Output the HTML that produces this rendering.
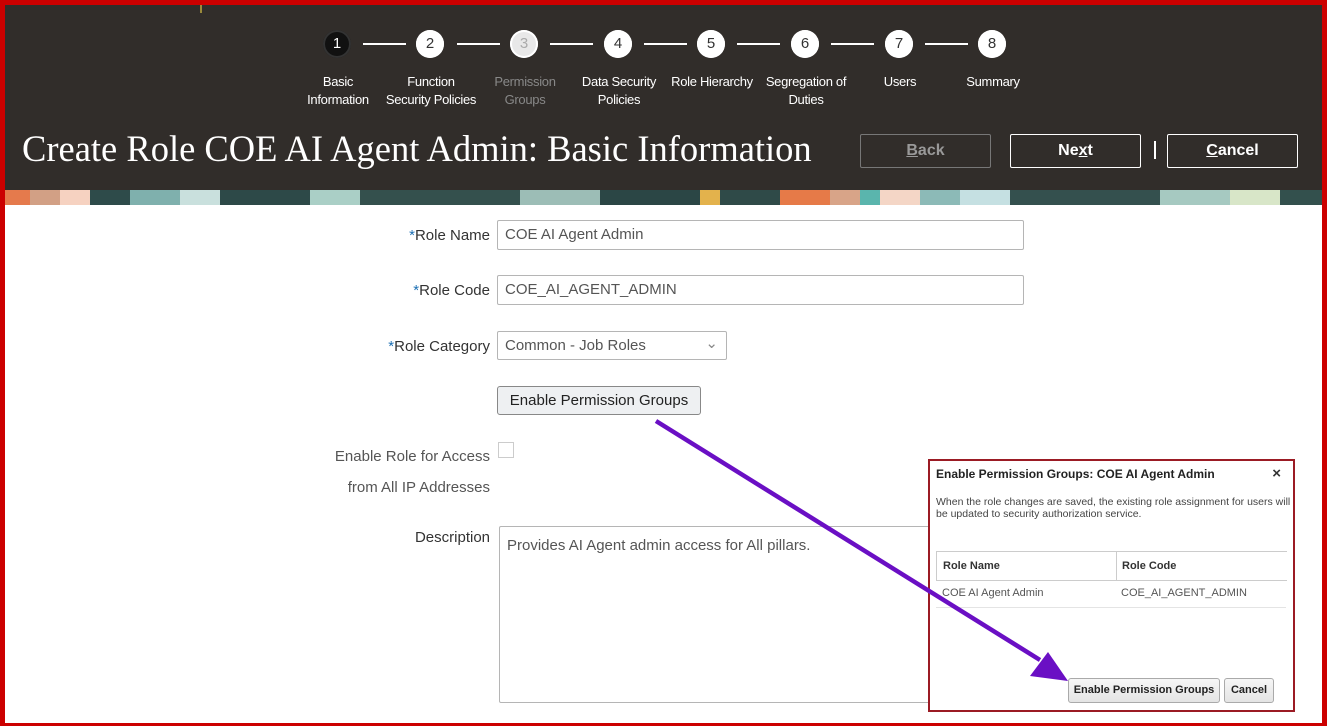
<!DOCTYPE html>
<html><head><style>
body{margin:0;width:1327px;height:726px;overflow:hidden;background:#fff;font-family:"Liberation Sans",sans-serif;position:relative}
.frame{position:absolute;left:0;top:0;width:1327px;height:726px;box-sizing:border-box;border:5px solid #c00;border-bottom-width:3px;pointer-events:none;z-index:5}
.hdr{position:absolute;left:0;top:0;width:1327px;height:191px;background:#312d2a}
.stripe{position:absolute;left:0;top:190px;width:1327px;height:15px;background:linear-gradient(90deg,#e57a4c 0 30px,#d2a085 30px 60px,#f6d2c1 60px 90px,#2e4b4a 90px 130px,#7fb0ad 130px 180px,#c9e0dd 180px 220px,#2d4948 220px 310px,#aacfc6 310px 360px,#34504d 360px 520px,#9cbdb6 520px 600px,#2b4645 600px 700px,#e3b24c 700px 720px,#2f4a48 720px 780px,#e67a48 780px 830px,#d8a488 830px 860px,#5ab5ad 860px 880px,#f4d6c6 880px 920px,#8cbab7 920px 960px,#c5e0e2 960px 1010px,#34504e 1010px 1160px,#a6c9c1 1160px 1230px,#d8e6c8 1230px 1280px,#33504d 1280px)}
.step{position:absolute;top:30px;width:28px;height:28px;border-radius:50%;background:#fff;color:#333;font-size:15px;text-align:center;line-height:28px;box-shadow:0 0 0 2px #fff inset}
.line{position:absolute;top:43px;height:2px;background:#fff;width:43px}
.lbl{position:absolute;top:73px;width:120px;text-align:center;color:#fff;font-size:13px;line-height:18px;letter-spacing:-.3px}
h1{position:absolute;left:22px;top:127px;margin:0;font-family:"Liberation Serif",serif;font-weight:normal;font-size:36.5px;color:#fff}
.hb{position:absolute;top:134px;width:131px;height:34px;box-sizing:border-box;border:1px solid #fff;border-radius:2px;color:#fff;font-weight:bold;font-size:16px;text-align:center;line-height:32px}
.fl{position:absolute;right:837px;font-size:15px;color:#333;text-align:right}
.fl b{color:#1c6fb3;font-weight:normal}
.inp{position:absolute;left:497px;box-sizing:border-box;border:1px solid #b5b5b5;border-radius:2px;font-size:15px;color:#555;padding-left:7px;line-height:28px;height:30px}
.dlg{position:absolute;left:928px;top:459px;width:367px;height:253px;box-sizing:border-box;border:2px solid #9b1b24;background:#fff;font-size:11px;color:#333;z-index:3}
.db{position:absolute;top:217px;height:25px;box-sizing:border-box;border:1px solid #aaa;border-radius:3px;background:linear-gradient(#f6f6f6,#e4e4e4);font-weight:bold;line-height:23px;text-align:center;font-size:11px;color:#222}
</style></head><body>
<div class="hdr"></div>
<div style="position:absolute;left:200px;top:0;width:2px;height:13px;background:#9a8a3a"></div>
<div class="stripe"></div>
<div class="step" style="left:323px;background:#111;color:#fff;box-shadow:0 0 0 2px #333 inset">1</div>
<div class="step" style="left:416px">2</div>
<div class="step" style="left:510px;background:#e8e8e8;color:#aaa">3</div>
<div class="step" style="left:604px">4</div>
<div class="step" style="left:697px">5</div>
<div class="step" style="left:791px">6</div>
<div class="step" style="left:885px">7</div>
<div class="step" style="left:978px">8</div>
<div class="line" style="left:363px"></div><div class="line" style="left:457px"></div><div class="line" style="left:550px"></div><div class="line" style="left:644px"></div><div class="line" style="left:737px"></div><div class="line" style="left:831px"></div><div class="line" style="left:925px"></div>
<div class="lbl" style="left:278px">Basic<br>Information</div>
<div class="lbl" style="left:371px">Function<br>Security Policies</div>
<div class="lbl" style="left:465px;color:#888">Permission<br>Groups</div>
<div class="lbl" style="left:559px">Data Security<br>Policies</div>
<div class="lbl" style="left:652px">Role Hierarchy</div>
<div class="lbl" style="left:746px">Segregation of<br>Duties</div>
<div class="lbl" style="left:840px">Users</div>
<div class="lbl" style="left:933px">Summary</div>
<h1>Create Role COE AI Agent Admin: Basic Information</h1>
<div class="hb" style="left:860px;border-color:#777;color:#999"><u>B</u>ack</div>
<div class="hb" style="left:1010px">Ne<u>x</u>t</div>
<div style="position:absolute;left:1154px;top:141px;width:2px;height:18px;background:#fff"></div>
<div class="hb" style="left:1167px"><u>C</u>ancel</div>

<div class="fl" style="top:227px"><b>*</b>Role Name</div>
<div class="inp" style="top:220px;width:527px">COE AI Agent Admin</div>
<div class="fl" style="top:282px"><b>*</b>Role Code</div>
<div class="inp" style="top:275px;width:527px">COE_AI_AGENT_ADMIN</div>
<div class="fl" style="top:338px"><b>*</b>Role Category</div>
<div class="inp" style="top:331px;width:230px;height:29px">Common - Job Roles<span style="position:absolute;right:8px;top:-2px;color:#888">&#8964;</span></div>
<div style="position:absolute;left:497px;top:386px;width:204px;height:29px;box-sizing:border-box;border:1px solid #888;border-radius:3px;background:#eef0f2;font-size:15px;color:#222;text-align:center;line-height:27px">Enable Permission Groups</div>
<div class="fl" style="top:441px;color:#555;line-height:31px">Enable Role for Access<br>from All IP Addresses</div>
<div style="position:absolute;left:498px;top:442px;width:16px;height:16px;border:1px solid #ccc;box-sizing:border-box"></div>
<div class="fl" style="top:529px">Description</div>
<div class="inp" style="top:526px;width:440px;height:177px;left:499px;line-height:18px;padding-top:10px">Provides AI Agent admin access for All pillars.</div>

<div class="dlg">
<div style="position:absolute;left:6px;top:6px;font-weight:bold;font-size:12px;color:#222">Enable Permission Groups: COE AI Agent Admin</div>
<div style="position:absolute;right:12px;top:4px;font-size:15px;font-weight:bold">×</div>
<div style="position:absolute;left:6px;top:35px;width:355px;line-height:12px;color:#444;font-size:10.5px">When the role changes are saved, the existing role assignment for users will be updated to security authorization service.</div>
<div style="position:absolute;left:6px;top:90px;width:350px;height:28px;border-top:1px solid #ccc;border-bottom:1px solid #ccc;border-left:1px solid #ccc;font-weight:bold">
<span style="position:absolute;left:6px;top:8px">Role Name</span>
<span style="position:absolute;left:179px;top:0;width:1px;height:28px;background:#ccc"></span>
<span style="position:absolute;left:185px;top:8px">Role Code</span></div>
<div style="position:absolute;left:12px;top:126px;color:#555">COE AI Agent Admin</div>
<div style="position:absolute;left:191px;top:126px;color:#555">COE_AI_AGENT_ADMIN</div>
<div style="position:absolute;left:6px;top:146px;width:350px;height:1px;background:#e4e4e4"></div>
<div class="db" style="left:138px;width:152px">Enable Permission Groups</div>
<div class="db" style="left:294px;width:50px">Cancel</div>
</div>
<svg style="position:absolute;left:0;top:0;z-index:4" width="1327" height="726"><line x1="656" y1="421" x2="1040" y2="660" stroke="#6a0fc4" stroke-width="4.5"/><polygon points="1068,681 1048,652 1030,676" fill="#6a0fc4"/></svg>
<div class="frame"></div>
</body></html>
